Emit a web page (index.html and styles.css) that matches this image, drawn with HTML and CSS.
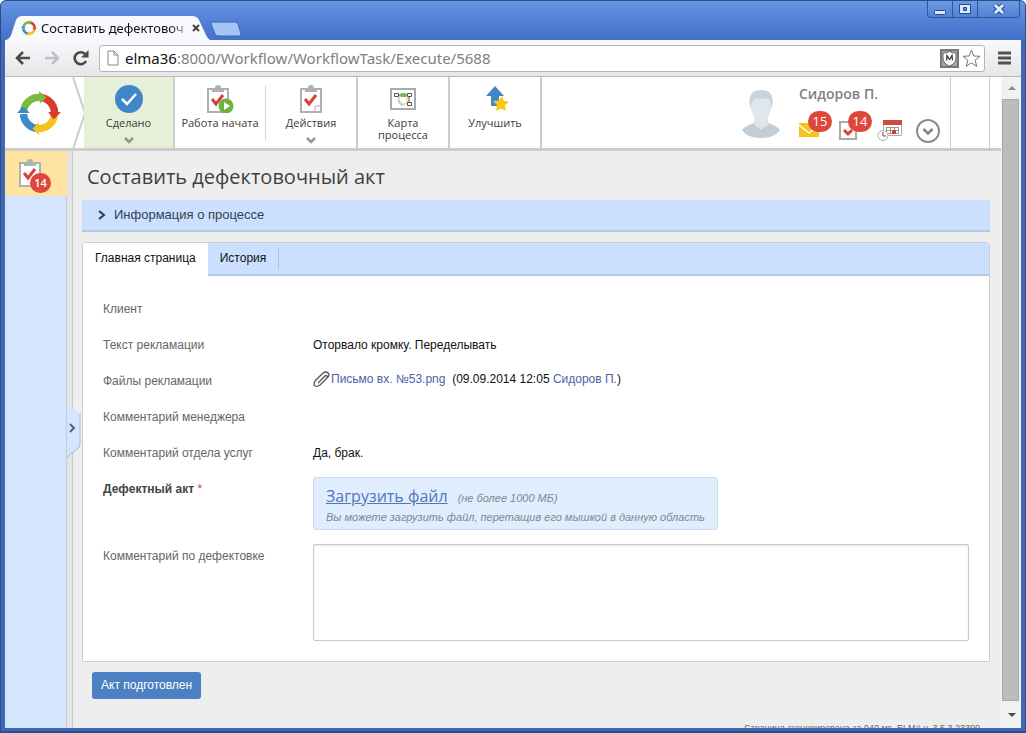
FILE: index.html
```html
<!DOCTYPE html>
<html lang="ru">
<head>
<meta charset="utf-8">
<title>Составить дефектовочный акт</title>
<link rel="stylesheet" href="styles.css">
</head>
<body>
<div class="window">
  <header class="titlebar">
    <div class="browser-tab">
      <svg class="tab-shape" viewBox="0 0 204 24" preserveAspectRatio="none"><path d="M0 24C5 22 5 19 7 13L10 4Q12 0 16 0H186Q191 0 193 4L200 19Q202 23 204 24Z" fill="#f8f9fc"/></svg>
      <svg class="favicon" viewBox="0 0 48 48"><use href="#ring"/></svg>
      <span class="tab-title">Составить дефектовоч</span>
      <button class="tab-close" aria-label="Закрыть вкладку"><svg width="8" height="8" viewBox="0 0 8 8"><path d="M1 1l6 6M7 1L1 7" stroke="#444" stroke-width="2"/></svg></button>
    </div>
    <button class="new-tab" aria-label="Новая вкладка"><svg width="32" height="16" viewBox="0 0 32 16"><path d="M2 1h23q2 0 3 2l3 10q0 2-2 2H9q-3 0-4-2L1 3q0-2 1-2z" fill="#a4c4f5" stroke="#3c66b5"/></svg></button>
    <div class="win-buttons">
      <button aria-label="Свернуть"><svg width="14" height="12" viewBox="0 0 14 12"><rect x="1.500" y="7.500" width="11" height="4" rx="1" fill="#dce9ff" stroke="#244a8c"/></svg></button>
      <button aria-label="Развернуть"><svg width="14" height="12" viewBox="0 0 14 12"><path d="M1.500 1.500h11v9h-11zM5.500 4.500h3v3h-3z" fill="#dce9ff" fill-rule="evenodd" stroke="#244a8c"/></svg></button>
      <button class="win-close" aria-label="Закрыть"><svg width="14" height="12" viewBox="0 0 14 12"><path d="M3 2l8 8M11 2l-8 8" stroke="#244a8c" stroke-width="5"/><path d="M3 2l8 8M11 2l-8 8" stroke="#dce9ff" stroke-width="3"/></svg></button>
    </div>
  </header>

  <nav class="toolbar">
    <button aria-label="Назад"><svg width="16" height="14" viewBox="0 0 16 14"><path d="M15 7H2M8 1L2 7l6 6" fill="none" stroke="#4a4a4a" stroke-width="2.500"/></svg></button>
    <button aria-label="Вперёд"><svg width="16" height="14" viewBox="0 0 16 14"><path d="M1 7h13M8 1l6 6-6 6" fill="none" stroke="#bfbfc1" stroke-width="2.500"/></svg></button>
    <button aria-label="Обновить"><svg width="16" height="16" viewBox="0 0 16 16"><path d="M13 11A6 6 0 1 1 12 4" fill="none" stroke="#4a4a4a" stroke-width="2.600"/><path d="M15.500 0v7.500H8z" fill="#4a4a4a"/></svg></button>
    <div class="omnibox">
      <svg width="12" height="16" viewBox="0 0 12 16"><path d="M1 1h6l4 4v10H1zM7 1v4h4" fill="#fff" stroke="#888"/></svg>
      <div class="url" role="textbox" aria-label="Адрес" tabindex="0"><span class="host">elma36</span>:8000/Workflow/WorkflowTask/Execute/5688</div>
      <svg width="19" height="19" viewBox="0 0 19 19"><rect x="1" y="1" width="17" height="17" fill="#a5a5a5" stroke="#777" stroke-width="2"/><path d="M3 4q4 0 6.500-1.500Q12 4 16 4v6q-1 5-6.500 7Q4 15 3 10z" fill="#fff" stroke="#666"/><path d="M6.500 11.500l.5-5 2.500 4 2.500-4 .5 5" fill="none" stroke="#444" stroke-width="1.400"/></svg>
      <button aria-label="Добавить закладку"><svg width="19" height="19" viewBox="0 0 19 19"><path d="M9.500 1l2.300 6 6.200.300-4.900 3.900 1.700 6.200-5.300-3.500-5.300 3.500 1.700-6.200L1 7.300 7.200 7z" fill="#fff" stroke="#777"/></svg></button>
    </div>
    <button class="menu" aria-label="Меню"><svg width="13" height="14" viewBox="0 0 13 14"><path d="M0 2h13M0 7h13M0 12h13" stroke="#4f5350" stroke-width="3"/></svg></button>
  </nav>

  <div class="viewport">
    <div class="page">
      <div class="app-header">
        <a class="logo" href="#" aria-label="ELMA">
          <svg class="logo-ring" viewBox="0 0 48 48">
            <defs><g id="ring" fill="none" stroke-width="8">
              <path d="M7 24A17 17 0 0 1 25 7" stroke="#7abb3c"/>
              <path d="M26 7A17 17 0 0 1 41 23" stroke="#dc3a2c"/>
              <path d="M41 24A17 17 0 0 1 24 41" stroke="#f6c21c"/>
              <path d="M23 41A17 17 0 0 1 7 25" stroke="#4088c8"/>
              <path d="M24 0l8 7-7 7z" fill="#7abb3c" stroke="none"/>
              <path d="M34 23h14l-8 8z" fill="#dc3a2c" stroke="none"/>
              <path d="M24 34v14l-7-7z" fill="#f6c21c" stroke="none"/>
              <path d="M0 24l7-7 7 7z" fill="#4088c8" stroke="none"/>
            </g></defs>
            <use href="#ring"/>
          </svg>
          <svg class="logo-arrow" width="14" height="72" viewBox="0 0 14 72"><path d="M1 0l12 36L1 72" fill="none" stroke="#ccc" stroke-width="2"/></svg>
        </a>
        <button class="action done">
          <svg width="28" height="28" viewBox="0 0 28 28"><circle cx="14" cy="14" r="14" fill="#3f87c9"/><path d="M7 14l5 5 9-10" fill="none" stroke="#fff" stroke-width="2.500"/></svg>
          <span>Сделано</span>
          <svg class="caret" width="10" height="7" viewBox="0 0 10 7"><path d="M1 1l4 4 4-4" fill="none" stroke="#8f9b83" stroke-width="2.500"/></svg>
        </button>
        <button class="action">
          <svg width="28" height="28" viewBox="0 0 28 28"><use href="#clip"/><circle cx="20" cy="21" r="7.500" fill="#6bb444"/><path d="M18 17l6 4-6 4z" fill="#fff"/></svg>
          <span>Работа начата</span>
        </button>
        <i class="thin-line"></i>
        <button class="action">
          <svg width="28" height="28" viewBox="0 0 28 28">
            <defs><g id="clip"><path d="M2 4h20v23H2z" fill="#fff" stroke="#aeb0b2" stroke-width="2"/><path d="M6 3h3q0-3 3-3t3 3h3v4H6z" fill="#aeb0b2"/><path d="M6 14l4 5 7-9" fill="none" stroke="#d9433c" stroke-width="3"/></g></defs>
            <g transform="translate(2)"><use href="#clip"/><path d="M16 27v-6h6" fill="#fff" stroke="#aeb0b2"/></g></svg>
          <span>Действия</span>
          <svg class="caret" width="10" height="7" viewBox="0 0 10 7"><path d="M1 1l4 4 4-4" fill="none" stroke="#999" stroke-width="2.500"/></svg>
        </button>
        <button class="action ruled">
          <svg width="28" height="28" viewBox="0 0 28 28"><path d="M2 4h24v20H2z" fill="#fff" stroke="#aaa" stroke-width="2"/><circle cx="14" cy="15" r="4.500" fill="none" stroke="#f5d7a8" stroke-width="2"/><path d="M10 15a4.500 4.500 0 0 0 4 4.500" fill="none" stroke="#a6d0ec" stroke-width="2"/><path d="M8 10h12v7" fill="none" stroke="#555"/><path d="M5.500 8.500h4v3h-4zM18.500 8.500h4v3h-4zM18.500 17.500h4v3h-4z" fill="#fff" stroke="#555"/><path d="M12 8h5v4h-5z" fill="#7bb661"/></svg>
          <span>Карта процесса</span>
        </button>
        <button class="action ruled">
          <svg width="28" height="28" viewBox="0 0 28 28"><path d="M14 1l9 10h-5v10h-8V11H5z" fill="#3f87c9"/><path d="M21 11l2 5 5 .500-4 4 1 5.500-5-2.500-5 2.500 1-6-4-4 6-.500z" fill="#fbc915"/></svg>
          <span>Улучшить</span>
        </button>
        <i class="thick-line"></i>
        <div class="user">
          <svg class="avatar" width="40" height="50" viewBox="0 0 40 50"><path d="M1 41q3-4 12-7l7 6 7-6q9 3 12 7-5 8-19 8T1 41z" fill="#c3cdd6"/><path d="M13 30h14v6q-7 7-14 0z" fill="#dce4ea"/><path d="M9 17Q7 2 20 1q14 0 11 16l-3 9q-3 8-8 8t-8-8z" fill="#dfe7ed"/><path d="M9 18Q6 1 20 1t11 17h-1q0-6-3-9-8 2-13 0-4 3-4 9z" fill="#c9d3dc"/></svg>
          <div class="user-info">
            <a class="user-name" href="#">Сидоров П.</a>
            <div class="user-icons">
              <button class="counter mail" aria-label="Сообщения: 15"><svg width="20" height="14" viewBox="0 0 20 14"><path d="M0 0h20v14H0z" fill="#f5c51c"/><path d="M0 2l10 8L20 2" fill="none" stroke="#fff" stroke-width="1.500"/></svg><b>15</b></button>
              <button class="counter" aria-label="Задачи: 14"><svg width="18" height="20" viewBox="0 0 18 20"><path d="M1 2h16v17H1z" fill="#fff" stroke="#aaa" stroke-width="2"/><path d="M5 10l4 4 4-4" fill="none" stroke="#d9433c" stroke-width="3"/></svg><b>14</b></button>
              <button class="calendar" aria-label="Календарь"><svg width="25" height="21" viewBox="0 0 25 21"><path d="M6.500 1.500h18v14h-18z" fill="#fff" stroke="#b5a9a3"/><path d="M6 0h19v5H6z" fill="#cf4a3b"/><path d="M9 7.500h13M9 10.500h13M9 13.500h13M9.500 7v7M13.500 7v7M17.500 7v7M21.500 7v7" stroke="#999"/><path d="M15 10h4v4h-4z" fill="#cf3e37"/><circle cx="6" cy="15.500" r="5" fill="#fff" stroke="#aaa"/><path d="M6 12v4h3" fill="none" stroke="#a33"/></svg></button>
              <button class="more" aria-label="Ещё"><svg width="24" height="24" viewBox="0 0 24 24"><circle cx="12" cy="12" r="11" fill="#fff" stroke="#8c8c8c" stroke-width="2"/><path d="M7.500 10l4.500 4.500 4.500-4.500" fill="none" stroke="#858585" stroke-width="2.500"/></svg></button>
            </div>
          </div>
        </div>
        <i class="edge"></i>
      </div>

      <div class="app-body">
        <aside class="sidebar">
          <a class="side-item" href="#" aria-label="Мои задачи: 14"><svg width="24" height="28" viewBox="0 0 24 28"><use href="#clip"/></svg><b>14</b></a>
          <button class="side-handle" aria-label="Раскрыть панель"><svg width="15" height="56" viewBox="0 0 15 56"><path d="M0 0Q2 3 8 6q5 3 5 9v26q0 4-5 7-6 3-8 7z" fill="#d3e6fd"/><path d="M13 10v31q0 4-5 7-6 3-8 7" fill="none" stroke="#9fbcdc"/><path d="M3 21l4 4-4 4" fill="none" stroke="#4c638d" stroke-width="2"/></svg></button>
        </aside>
        <main class="content">
          <h1>Составить дефектовочный акт</h1>
          <button class="info-bar"><svg width="8" height="10" viewBox="0 0 8 10"><path d="M1 1l5 4-5 4" fill="none" stroke="#2d3c55" stroke-width="2"/></svg>Информация о процессе</button>
          <section class="panel">
            <div class="tabs" role="tablist">
              <button class="tab active" role="tab" aria-selected="true">Главная страница</button>
              <button class="tab" role="tab" aria-selected="false">История</button>
            </div>
            <div class="form">
              <div class="row"><span class="label">Клиент</span></div>
              <div class="row"><span class="label">Текст рекламации</span><span>Оторвало кромку. Переделывать</span></div>
              <div class="row"><span class="label">Файлы рекламации</span><span class="file"><svg width="18" height="17" viewBox="0 0 18 17"><path d="M5 12l7-7q1-1 2 0t0 2l-7 7q-3 2-5 1t0-5l8-8q3-2 5 0t0 4l-7 7" fill="none" stroke="#555" stroke-width="1.300"/></svg><a href="#">Письмо вх. №53.png</a>&nbsp; (09.09.2014 12:05 <a href="#">Сидоров П.</a>)</span></div>
              <div class="row"><span class="label">Комментарий менеджера</span></div>
              <div class="row"><span class="label">Комментарий отдела услуг</span><span>Да, брак.</span></div>
              <div class="row"><span class="label required">Дефектный акт <em>*</em></span>
                <div class="upload">
                  <div><a href="#">Загрузить файл</a><span>(не более 1000 МБ)</span></div>
                  <p>Вы можете загрузить файл, перетащив его мышкой в данную область</p>
                </div>
              </div>
              <div class="row comment"><label class="label" for="comment">Комментарий по дефектовке</label><textarea id="comment"></textarea></div>
            </div>
          </section>
          <button class="submit">Акт подготовлен</button>
          <footer class="footer">Страница сгенерирована за 940 мс. ELMA v. 3.5.3.23399</footer>
        </main>
      </div>
    </div>
    <div class="scrollbar"><i class="arrow up"></i><i class="thumb"></i><i class="arrow down"></i></div>
  </div>
</div>
</body>
</html>
```

FILE: styles.css
```css
* { box-sizing: border-box; }
body { margin: 0; font: 12px/16px "Liberation Sans", Arial, sans-serif; color: #111; }
button { font: inherit; color: inherit; background: none; border: 0; padding: 0; cursor: pointer; }
svg { display: block; flex: none; }
a { color: #4c61a8; text-decoration: none; }

.window { height: 100vh; display: flex; flex-direction: column; overflow: hidden; background: #3f69b4; border: solid #2c4d88; border-width: 1px 1px 2px; border-radius: 6px 6px 0 0; padding: 0 4px 3px; }

/* Browser frame */
.titlebar { flex: none; height: 39px; margin: 0 -4px; padding: 0 5px; display: flex; align-items: flex-end; background: linear-gradient(#6697e2, #5583d6 45%, #4470cb); }
.browser-tab { position: relative; width: 204px; height: 24px; display: flex; align-items: center; gap: 4px; padding: 0 16px 0 15px; }
.tab-shape { position: absolute; inset: 0; width: 100%; height: 100%; }
.favicon { position: relative; width: 16px; height: 16px; }
.tab-title { position: relative; flex: 1; white-space: nowrap; font: 13px/18px "Noto Sans", sans-serif; color: #111; mask-image: linear-gradient(90deg, #000 90%, #0006); }
.tab-close { position: relative; margin-left: 4px; }
.new-tab { align-self: flex-end; margin-bottom: 3px; }
.win-buttons { margin-left: auto; align-self: flex-start; display: flex; border: 1px solid #2e559f; border-top: 0; border-radius: 0 0 4px 4px; background: linear-gradient(#6c9ae2, #5582d2); }
.win-buttons button { width: 25px; height: 16px; display: grid; place-items: center; border-right: 1px solid #2e559f; }
.win-buttons .win-close { width: 41px; border: 0; }

.toolbar { flex: none; height: 37px; display: flex; align-items: center; gap: 13px; padding: 0 10px; background: linear-gradient(#f8f9fc, #e6e6e8); border-bottom: 1px solid #b9babc; }
.omnibox { flex: 1; height: 27px; display: flex; align-items: center; gap: 3px; padding: 0 3px 0 7px; margin-left: -3px; background: #fff; border: 1px solid #b5b5b9; border-radius: 3px; }
.url { flex: 1; margin-left: 3px; font: 15px/24px "Noto Sans", sans-serif; color: #808080; white-space: nowrap; overflow: hidden; }
.host { color: #111; }

.viewport { flex: 1; min-height: 0; display: flex; }
.page { flex: 1; min-width: 0; display: flex; flex-direction: column; }

/* Application header */
.app-header { flex: none; height: 74px; display: flex; background: #fff; border-bottom: 3px solid #cdcdcd; font-family: "Open Sans", sans-serif; }
.logo { flex: none; width: 79px; display: flex; align-items: center; padding-left: 12px; gap: 11px; }
.logo-ring { width: 44px; height: 44px; }
.action { flex: none; width: 90px; display: flex; flex-direction: column; align-items: center; padding: 8px 4px 0; font-size: 11px; line-height: 12px; color: #3c3c3c; }
.action span { margin-top: 4px; white-space: nowrap; }
.action.done { width: 91px; background: #e7efd9; border-right: 2px solid #cdcdcd; }
.action .caret { margin-top: 8px; }
.action.ruled { width: 92px; border-left: 2px solid #cdcdcd; }
.action.ruled span { white-space: normal; }
.thin-line { width: 1px; margin: 8px 0; background: #d5d5d5; }
.thick-line { width: 2px; background: #cdcdcd; }
.user { flex: 1; display: flex; justify-content: flex-end; gap: 18px; padding: 12px 10px 0 0; border-right: 1px solid #cdcdcd; }
.user-info { width: 141px; }
.user-name { display: block; margin-top: -5px; font-size: 14px; font-weight: 600; line-height: 20px; color: #808080; }
.user-icons { display: flex; align-items: flex-end; height: 39px; gap: 16px; }
.counter { position: relative; padding-bottom: 3px; }
.counter b { position: absolute; left: 9px; bottom: 11px; width: 24px; height: 21px; border-radius: 12px; background: #df473c; color: #fff; font: 13px/21px "Open Sans", sans-serif; }
.mail { margin-right: 4px; padding-bottom: 6px; }
.calendar { margin-left: 4px; padding-bottom: 2px; }
.more { margin-left: -2px; }
.edge { flex: none; width: 50px; background: linear-gradient(90deg, #fff 38px, #cdcdcd 38px, #cdcdcd 39px, #fff 39px); }

/* Working area */
.app-body { flex: 1; min-height: 0; display: flex; background: #eeeeef; }
.sidebar { position: relative; flex: none; width: 67px; background: #d3e6fd; border-right: 5px solid #e3e5e5; box-shadow: inset -1px 0 #c5ccd4, 1px 0 #c9c9c9; margin-right: 1px; }
.side-item { position: relative; display: block; height: 45px; padding: 8px 13px; background: #ffe3a0; }
.side-item b { position: absolute; left: 25px; top: 22px; width: 21px; height: 20px; border-radius: 10px; background: #df473c; color: #fff; font: 600 11px/20px "Open Sans", sans-serif; text-align: center; }
.side-handle { position: absolute; left: 62px; top: 252px; }
.content { flex: 1; min-width: 0; overflow: hidden; padding: 11px 11px 0 9px; }
h1 { margin: 0 0 8px; padding-left: 5px; font: 20px/30px "Open Sans", sans-serif; color: #3f3f3f; }
.info-bar { width: 100%; height: 32px; display: flex; align-items: center; gap: 8px; padding-left: 16px; background: #cbe0fe; border-bottom: 2px solid #b3cbe2; font-size: 13px; color: #333f52; }
.panel { margin-top: 10px; background: #fff; border: 1px solid #cfcfcf; border-radius: 4px 4px 0 0; }
.tabs { display: flex; background: #cbe0fe; height: 33px; border-bottom: 2px solid #b3cbe2; border-radius: 3px 3px 0 0; }
.tab { height: 31px; padding: 0 12px; }
.tab.active { height: 33px; background: #fff; padding-bottom: 4px; border-radius: 3px 0 0 0; }
.tab:last-child { margin: 5px 0; height: 21px; padding-bottom: 2px; border-right: 1px solid #a9c4e4; }
.form { padding: 15px 20px 20px; }
.row { display: grid; grid-template-columns: 210px minmax(0, 1fr); line-height: 36px; min-height: 36px; }
.label { color: #666; }
.required { font-weight: bold; color: #444; }
.required em { color: #d8434b; font-style: normal; font-weight: normal; }
.file { align-self: start; display: flex; align-items: center; white-space: pre; line-height: 32px; }
.upload { justify-self: start; margin-top: 6px; height: 53px; padding: 7px 12px 0; background: #e0edfd; border: 1px solid #c9dbee; border-radius: 3px; line-height: 16px; font-size: 11px; font-style: italic; color: #7f8791; }
.upload div { display: flex; align-items: baseline; gap: 10px; line-height: 22px; }
.upload a { font: 16px/22px "Open Sans", sans-serif; color: #5078b8; text-decoration: underline; }
.upload p { margin: 0; }
.comment { margin-top: 14px; line-height: 24px; }
textarea { width: 100%; height: 97px; border: 1px solid #c9c9c9; border-radius: 2px; box-shadow: inset 0 1px 2px #e5e5e5; resize: none; font: inherit; }
.submit { display: block; height: 27px; margin: 10px 0 0 10px; padding: 0 9px 2px; background: #4c80c2; color: #fff; border-radius: 3px; }
.footer { margin-top: 21px; padding-right: 10px; text-align: right; font-size: 9px; line-height: 16px; color: #666; }

.scrollbar { flex: none; width: 20px; display: flex; flex-direction: column; background: #f1f1f1; padding-left: 1px; }
.arrow { flex: none; height: 22px; display: grid; place-items: center; }
.arrow::before { content: ""; border: 4px solid transparent; border-top: 0; border-bottom: 4px solid #8a8a8a; }
.arrow.down { height: 27px; }
.arrow.down::before { border-bottom: 0; border-top: 4px solid #4b4b4b; }
.thumb { flex: 1; margin-right: 2px; background: #bcbcbc; border: 1px solid #a8a8a8; }
```
